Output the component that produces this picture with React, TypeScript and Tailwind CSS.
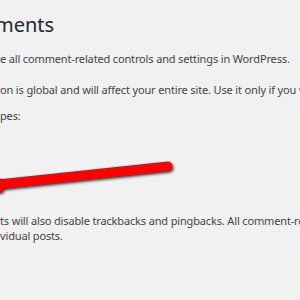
export default function App() {
  return (
    <div className="relative w-[300px] h-[300px] overflow-hidden bg-[#f1f1f1] text-[#444] font-['Noto_Sans','Open_Sans',sans-serif] whitespace-nowrap">
      <div className="flex flex-col pt-[10px]">
        <h1 className="text-[20px] leading-[30px] text-[#23282d] font-normal ml-[-5px]">ments</h1>
        <p className="text-[11px] leading-[18px] tracking-[-0.15px] mt-[10px]">e all comment-related controls and settings in WordPress.</p>
        <p className="text-[11px] leading-[18px] tracking-[-0.15px] mt-[13px]">on is global and will affect your entire site. Use it only if you want to disable comments everywhere.</p>
        <p className="text-[11px] leading-[18px] tracking-[-0.15px] mt-[8px]">pes:</p>
        <div className="h-[88px]" />
        <p className="text-[11px] leading-[15px] tracking-[-0.15px]">ts will also disable trackbacks and pingbacks. All comment-related fields will also be hidden</p>
        <p className="text-[11px] leading-[15px] tracking-[-0.15px]">vidual posts.</p>
      </div>

      {/* red annotation arrow */}
      <svg className="absolute left-0 top-0" width="300" height="300" viewBox="0 0 300 300">
        <defs>
          <filter id="shadow" x="-20%" y="-50%" width="140%" height="200%">
            <feDropShadow dx="1" dy="2" stdDeviation="1.4" floodColor="#000" floodOpacity="0.85" />
          </filter>
        </defs>
        <g filter="url(#shadow)">
          <line x1="-20" y1="186" x2="168" y2="166" stroke="#ff0000" strokeWidth="9" strokeLinecap="round" />
          <polygon points="-30,174 3,179 3,191 -30,199" fill="#ff0000" />
        </g>
      </svg>
    </div>
  )
}
